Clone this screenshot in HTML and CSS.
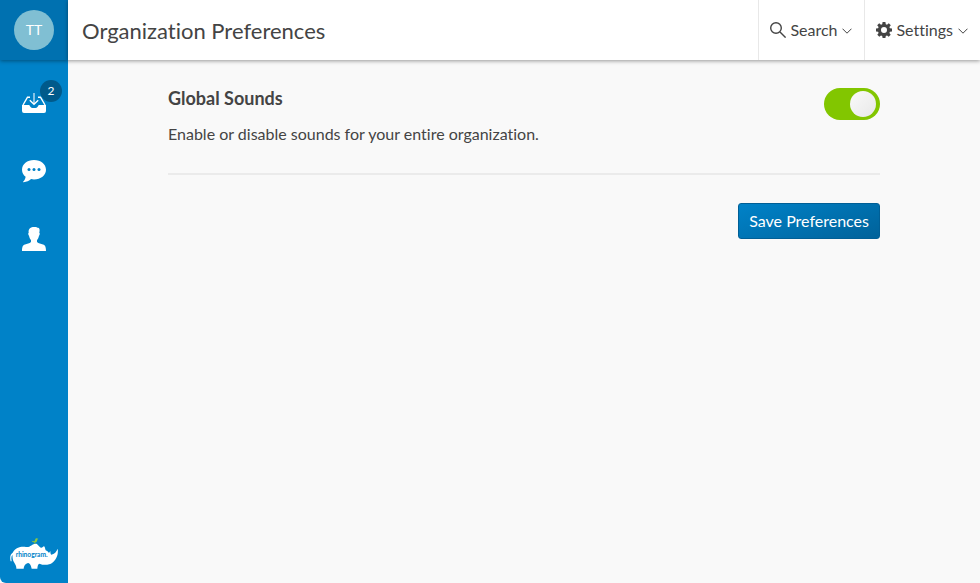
FILE: index.html
```html
<!DOCTYPE html>
<html lang="en">
<head>
<meta charset="utf-8">
<meta name="viewport" content="width=device-width, initial-scale=1">
<title>Organization Preferences</title>
<link rel="stylesheet" href="styles.css">
</head>
<body>
<div class="app">
  <aside class="sidebar">
    <div class="account"><button class="avatar" type="button">TT</button></div>
    <nav class="nav">
      <a class="nav-link" href="#inbox">
        <svg width="24" height="24" viewBox="0 0 24 24" fill="none">
          <path d="M8 6.200H5.500L1 14M16 6.200h2.500L23 14" stroke="#fff" stroke-width="1.400"/>
          <path d="M0 14h6.500c.8 0 1.200.5 1.500 1.200.6 1.300 1.900 1.800 4 1.800s3.400-.5 4-1.800c.3-.7.700-1.200 1.500-1.200H24v6a2 2 0 0 1-2 2H2a2 2 0 0 1-2-2z" fill="#fff"/>
          <path d="M12 2v11" stroke="#fff" stroke-width="1.400" stroke-opacity=".75"/>
          <path d="M7.800 9.300l4.200 4 4.200-4" stroke="#fff" stroke-width="1.400"/>
        </svg>
        <span class="badge">2</span>
      </a>
      <a class="nav-link" href="#messages">
        <svg width="24" height="24" viewBox="0 0 24 24">
          <path fill="#fff" d="M12 1C5.200 1 0 5.200 0 10.700c0 3 1.500 5.400 3.600 7.100-.2 1.800-.9 3.500-2.300 4.700-.4.4-.1.700.3.700 2.900-.1 5.500-1 7.500-3.100.9.200 1.900.3 2.900.3 6.800 0 12-4.200 12-9.700S18.800 1 12 1z"/>
          <g fill="#0082c8"><circle cx="7" cy="10.500" r="1.500"/><circle cx="12" cy="10.500" r="1.500"/><circle cx="17" cy="10.500" r="1.500"/></g>
        </svg>
      </a>
      <a class="nav-link" href="#contacts">
        <svg width="24" height="24" viewBox="0 0 24 24">
          <path fill="#fff" d="M7 2.500C8 .6 10 0 12.500 0c2 0 2.700.7 3.700.8 1.400.2 1.800 2 1.100 5 .8.300.5 2.200-.3 3-.4 2-1 3.300-2 4.200v2c1.500 1.500 4 1.800 6 2.500 2.300.8 3 2.500 3 6.500H0c0-4 .7-5.700 3-6.500 2-.7 4.500-1 6-2.500v-2c-1-.9-1.600-2.200-2-4.200-.8-.8-1.100-2.700-.3-3C6.400 4.500 6.500 3.500 7 2.500z"/>
        </svg>
      </a>
    </nav>
    <a class="logo" href="#home">
      <svg width="48" height="32" viewBox="0 0 144 96">
        <path fill="#fff" d="M2 70C-1 58 1 48 8 44C18 28 32 25 48 27C60 29 67 17 77 17C84 17 85 25 93 29C97 30 99 25 102 25C105 26 105 32 107 37C111 39 114 41 117 45L121 39C121 45 122 49 124 50C133 48 140 41 143 32C146 48 139 66 127 74C119 81 101 83 89 77C83 78 83 85 82 92H65C63 84 61 77 55 75C46 76 42 84 41 92H19C20 82 13 76 10 69C7 62 8 55 7 50C3 56 4 63 5 70Z"/>
        <path fill="#8cc63f" d="M65 8l7 2c3 0 3-7 6-9 3-1 4 1 7 1l-3 3c0 5-3 8-6 8v4h-3v-4c-4 0-6-2-8-5z"/>
        <text class="logo-text" x="17" y="57">rhinogram.</text>
      </svg>
    </a>
  </aside>
  <div class="page">
    <header class="topbar">
      <h1 class="title">Organization Preferences</h1>
      <button class="menu" type="button">
        <svg width="16" height="16" viewBox="0 0 16 16" fill="none" stroke="#444" stroke-width="1.400"><circle cx="6" cy="6" r="5.300"/><path d="M10 10l5.600 5.600"/></svg>
        <span>Search</span>
        <svg class="chevron" width="10" height="6" viewBox="0 0 10 6" fill="none" stroke="#444"><path d="M.5.700L5 5.200 9.500.700"/></svg>
      </button>
      <button class="menu" type="button">
        <svg width="16" height="16" viewBox="0 0 16 16"><path fill="#444" fill-rule="evenodd" d="M6.600 0h2.800l.4 2.200 1.200.5L12.800 1.300l2 2-1.400 1.800.5 1.200 2.100.3v2.800l-2.100.4-.5 1.200 1.300 1.800-2 2-1.700-1.400-1.200.5-.4 2.100H6.600l-.4-2.100-1.200-.5-1.700 1.400-2-2L2.600 11l-.5-1.200L0 9.400V6.600l2.100-.3.5-1.200-1.400-1.800 2-2L5 2.700l1.200-.5zM8 5a3 3 0 1 0 0 6 3 3 0 0 0 0-6z"/></svg>
        <span>Settings</span>
        <svg class="chevron" width="10" height="6" viewBox="0 0 10 6" fill="none" stroke="#444"><path d="M.5.700L5 5.200 9.500.700"/></svg>
      </button>
    </header>
    <main class="content">
      <section class="preference">
        <div>
          <h2 class="preference-title" id="sounds-title">Global Sounds</h2>
          <p class="preference-text">Enable or disable sounds for your entire organization.</p>
        </div>
        <input class="switch" type="checkbox" role="switch" aria-labelledby="sounds-title" checked>
      </section>
      <div class="actions"><button class="save" type="button">Save Preferences</button></div>
    </main>
  </div>
</div>
</body>
</html>
```
FILE: styles.css
```css
* { box-sizing: border-box; }
body {
  margin: 0;
  background: #f9f9f9;
  color: #444;
  font: 16px/24px Lato, sans-serif;
  font-variant-ligatures: none;
}
button { font: inherit; font-variant-ligatures: none; color: inherit; cursor: pointer; }
svg { display: block; flex: none; }
.app { display: flex; min-height: 100vh; }
.sidebar {
  display: flex;
  flex-direction: column;
  width: 68px;
  background: #0082c8;
  border-bottom-left-radius: 6px;
}
.account {
  display: grid;
  place-items: center;
  height: 60px;
  background: #0071b0;
  box-shadow: 0 1px 4px rgba(0, 0, 0, 0.4);
}
.avatar {
  width: 40px;
  height: 40px;
  padding: 0;
  border: 0;
  border-radius: 50%;
  background: #80bfd3;
  color: #fff;
  font-size: 14px;
}
.nav { flex: 1; padding-top: 9px; }
.nav-link {
  position: relative;
  display: grid;
  place-items: center;
  height: 68px;
}
.badge {
  position: absolute;
  top: 11px;
  right: 6px;
  width: 22px;
  height: 22px;
  border-radius: 50%;
  background: #005a8b;
  color: #fff;
  font-size: 12px;
  line-height: 22px;
  text-align: center;
}
.logo { display: block; padding: 0 10px 13px; }
.logo-text { font: bold 20px Lato, sans-serif; fill: #0082c8; }
.page { flex: 1; min-width: 0; }
.topbar {
  display: flex;
  height: 60px;
  background: #fff;
  box-shadow: 0 1px 4px rgba(0, 0, 0, 0.4);
}
.title {
  flex: 1;
  margin: 0;
  padding-left: 14px;
  font-size: 22px;
  font-weight: 400;
  line-height: 62px;
}
.menu {
  display: flex;
  align-items: center;
  gap: 4px;
  padding: 0 12px 0 11px;
  border: 0;
  border-left: 1px solid #e8e8e8;
  background: none;
}
.chevron { margin: 2px 0 0 1px; }
.content { padding: 28px 100px; }
.preference {
  display: flex;
  justify-content: space-between;
  align-items: flex-start;
  padding-bottom: 27px;
  border-bottom: 2px solid #ebebeb;
}
.preference-title { margin: 0 0 14px; font-size: 18px; line-height: 20px; }
.preference-text { margin: 0; }
.switch {
  appearance: none;
  display: flex;
  justify-content: flex-end;
  flex: none;
  width: 56px;
  height: 32px;
  margin: 0;
  padding: 3px 4px;
  border-radius: 16px;
  background: #82c600;
  cursor: pointer;
}
.switch::before {
  content: "";
  width: 26px;
  height: 26px;
  border-radius: 50%;
  background: linear-gradient(135deg, #fafafa, #e8e8e8);
}
.switch:not(:checked) { justify-content: flex-start; background: #bbb; }
.actions { display: flex; justify-content: flex-end; padding-top: 28px; }
.save {
  height: 36px;
  padding: 0 10px;
  border: 1px solid #005f96;
  border-radius: 3px;
  background: linear-gradient(160deg, #0082c8, #00629a);
  color: #fff;
}
```
